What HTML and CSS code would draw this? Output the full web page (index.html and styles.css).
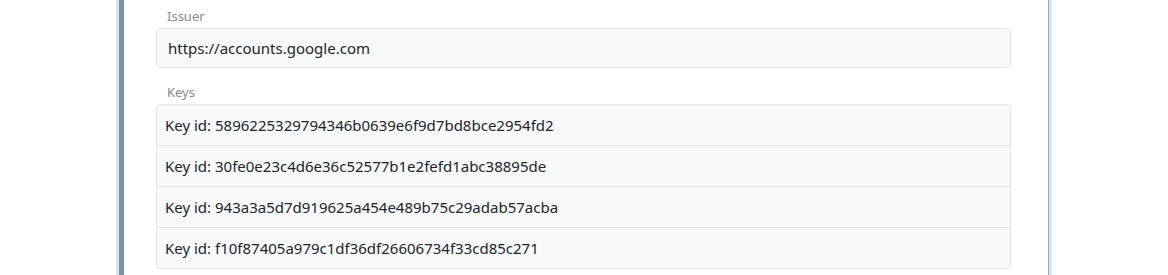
FILE: index.html
```html
<!DOCTYPE html>
<html>
<head>
<meta charset="utf-8">
<title>Provider</title>
<link rel="stylesheet" href="styles.css">
</head>
<body>
<div class="frame">
  <div class="panel">
    <div class="field">
      <label class="field-label">Issuer</label>
      <div class="field-value">https://accounts.google.com</div>
    </div>
    <div class="field">
      <label class="field-label">Keys</label>
      <ul class="key-list">
        <li>Key id: 5896225329794346b0639e6f9d7bd8bce2954fd2</li>
        <li>Key id: 30fe0e23c4d6e36c52577b1e2fefd1abc38895de</li>
        <li>Key id: 943a3a5d7d919625a454e489b75c29adab57acba</li>
        <li>Key id: f10f87405a979c1df36df26606734f33cd85c271</li>
      </ul>
    </div>
  </div>
</div>
</body>
</html>
```

FILE: styles.css
```css
html,body,ul,li{ margin:0; padding:0;}
li{ list-style:none;}
body{ background:#fff; font-family:"Noto Sans","Open Sans",sans-serif; color:#212529;}
.frame{ width:930px; height:275px; margin-left:116px; border-left:3px solid #d6e4ef; border-right:3px solid #d9e6ef;}
.panel{ box-sizing:border-box; height:100%; border-left:5px solid #7691a8; border-right:1px solid #9aa3ab; padding:8px 37px 0 32px;}
.field{ margin-bottom:16px;}
.field-label{ display:block; font-size:13px; color:#858a90; line-height:16px; padding:0 0 4px 11px;}
.field-value{ background:#f8f9fa; border:1px solid #e3e5e8; border-radius:4px; height:38px; line-height:38px; padding:0 11px; font-size:15px;}
.key-list{ border:1px solid #e3e5e8; border-radius:4px; background:#f8f9fa;}
.key-list li{ height:40px; line-height:40px; padding:0 8px; font-size:15px; border-top:1px solid #e3e5e8;}
.key-list li:first-child{ border-top:0;}
```
